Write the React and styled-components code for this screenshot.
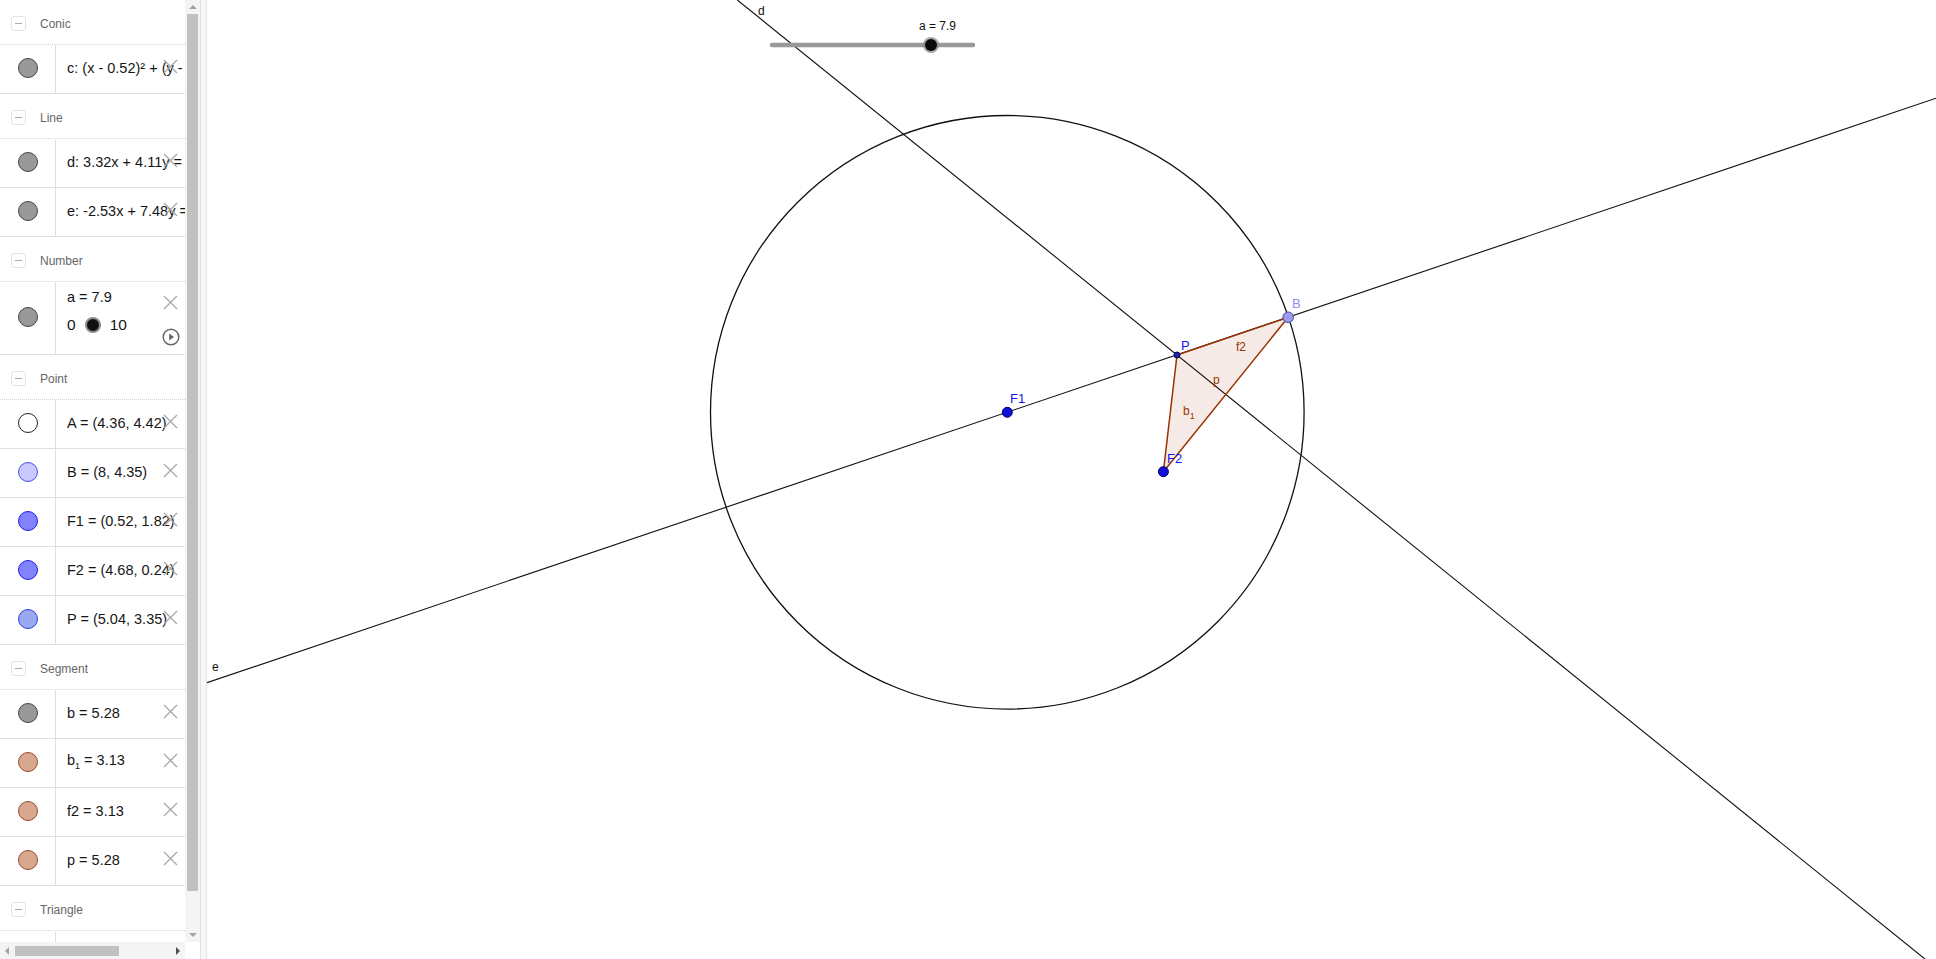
import React from 'react';
import styled, { createGlobalStyle } from 'styled-components';

const Global = createGlobalStyle`
  html, body { margin: 0; padding: 0; background: #fff; overflow: hidden; }
  body { font-family: "Liberation Sans", Arial, sans-serif; }
  #root { width: 1936px; height: 959px; }
`;

const Page = styled.div`
  display: flex;
  width: 1936px;
  height: 959px;
  overflow: hidden;
`;

const Sidebar = styled.div`
  flex: 0 0 200px;
  display: flex;
  flex-direction: column;
  height: 100%;
  background: #fff;
`;

const SideMain = styled.div`
  flex: 1;
  min-height: 0;
  display: flex;
`;

const List = styled.div`
  flex: 0 0 185px;
  display: flex;
  flex-direction: column;
  overflow: hidden;
`;

const Header = styled.div`
  flex: 0 0 45px;
  box-sizing: border-box;
  display: flex;
  align-items: center;
  gap: 14px;
  padding: 3px 0 0 11px;
  border-bottom: 1px dotted #d4d4d4;
  font-size: 12px;
  color: #666;
`;

const Toggle = styled.span`
  width: 13px;
  height: 13px;
  border: 1px solid #e4e4e4;
  border-radius: 3px;
  display: flex;
  align-items: center;
  justify-content: center;
  &::after {
    content: '';
    width: 7px;
    height: 1px;
    background: #aaa;
  }
`;

const Row = styled.div`
  position: relative;
  flex: 0 0 ${(p) => p.$h || 49}px;
  box-sizing: border-box;
  display: flex;
  border-bottom: 1px solid #dedede;
`;

const MarbleCell = styled.div`
  flex: 0 0 56px;
  border-right: 1px solid #dedede;
  display: flex;
  align-items: center;
  justify-content: center;
  padding-bottom: 3px;
  box-sizing: border-box;
`;

const Marble = styled.span`
  width: 18px;
  height: 18px;
  border-radius: 50%;
  background: ${(p) => p.$fill};
  border: 1px solid ${(p) => p.$stroke};
`;

const Content = styled.div`
  flex: 1;
  min-width: 0;
  overflow: hidden;
  white-space: nowrap;
  padding-left: 11px;
  padding-bottom: 3px;
  display: flex;
  flex-direction: column;
  justify-content: center;
  font-size: 14.5px;
  color: #161616;
`;

const NumContent = styled(Content)`
  justify-content: flex-start;
  padding-top: 7px;
  gap: 11px;
`;

const SliderLine = styled.div`
  display: flex;
  align-items: center;
  gap: 9px;
  font-size: 15.5px;
`;

const Knob = styled.span`
  width: 12px;
  height: 12px;
  border-radius: 50%;
  background: #111;
  border: 2px solid #8a8a8a;
`;

const Del = styled.svg`
  position: absolute;
  right: 7px;
  top: ${(p) => p.$top}px;
  width: 15px;
  height: 15px;
`;

const Play = styled.svg`
  position: absolute;
  right: 5px;
  top: 46px;
  width: 18px;
  height: 18px;
`;

const VScroll = styled.div`
  flex: 0 0 15px;
  display: flex;
  flex-direction: column;
  align-items: flex-end;
  background: #f4f4f4;
  padding-right: 2px;
  box-sizing: border-box;
`;

const Arrow = styled.span`
  flex: 0 0 14px;
  width: 11px;
  display: flex;
  align-items: center;
  justify-content: center;
  &::after {
    content: '';
    border-left: 4px solid transparent;
    border-right: 4px solid transparent;
    ${(p) => (p.$down ? 'border-top: 4px solid #a3a3a3;' : 'border-bottom: 4px solid #a3a3a3;')}
  }
`;

const VThumb = styled.div`
  width: 11px;
  flex: 0 0 877px;
  background: #c1c1c1;
`;

const VSpace = styled.div`
  flex: 1;
`;

const HScrollRow = styled.div`
  flex: 0 0 17px;
  display: flex;
`;

const HScroll = styled.div`
  flex: 0 0 185px;
  display: flex;
  align-items: center;
  background: #f4f4f4;
`;

const HArrow = styled.span`
  flex: 0 0 14px;
  height: 17px;
  display: flex;
  align-items: center;
  justify-content: center;
  &::after {
    content: '';
    border-top: 4px solid transparent;
    border-bottom: 4px solid transparent;
    ${(p) => (p.$right ? 'border-left: 4px solid #505050;' : 'border-right: 4px solid #a3a3a3;')}
  }
`;

const HThumb = styled.div`
  flex: 0 0 104px;
  height: 10px;
  background: #c1c1c1;
  margin-left: 1px;
`;

const Corner = styled.div`
  flex: 1;
  background: #fff;
`;

const Splitter = styled.div`
  flex: 0 0 7px;
  box-sizing: border-box;
  border-left: 1px solid #e2e2e2;
  border-right: 1px solid #e2e2e2;
  background: #f7f7f7;
`;

const Canvas = styled.div`
  flex: 1;
  position: relative;
  background: #fff;
`;

const Board = styled.svg`
  display: block;
  font-family: "Liberation Sans", Arial, sans-serif;
`;

const DelIcon = ({ top }) => (
  <Del $top={top} viewBox="0 0 15 15">
    <path d="M1 1 L14 14 M14 1 L1 14" stroke="#a9a9a9" strokeWidth="1.4" fill="none" />
  </Del>
);

const grey = { fill: '#999', stroke: '#444' };
const brown = { fill: '#d7a78f', stroke: '#9a4b27' };

const groups = [
  { title: 'Conic', items: [{ m: grey, t: 'c: (x - 0.52)² + (y - 1.82)² = 62.41' }] },
  {
    title: 'Line',
    items: [
      { m: grey, t: 'd: 3.32x + 4.11y = 30.5' },
      { m: grey, t: 'e: -2.53x + 7.48y = 12.32' },
    ],
  },
  { title: 'Number', number: true },
  {
    title: 'Point',
    items: [
      { m: { fill: '#fff', stroke: '#222' }, t: 'A = (4.36, 4.42)' },
      { m: { fill: '#c8c8ff', stroke: '#4d4df0' }, t: 'B = (8, 4.35)' },
      { m: { fill: '#8282ff', stroke: '#2020e0' }, t: 'F1 = (0.52, 1.82)' },
      { m: { fill: '#8282ff', stroke: '#2020e0' }, t: 'F2 = (4.68, 0.24)' },
      { m: { fill: '#9aa8f0', stroke: '#2b3fe0' }, t: 'P = (5.04, 3.35)' },
    ],
  },
  {
    title: 'Segment',
    items: [
      { m: grey, t: 'b = 5.28' },
      { m: brown, t: <>b<sub style={{ fontSize: '9px' }}>1</sub> = 3.13</> },
      { m: brown, t: 'f2 = 3.13' },
      { m: brown, t: 'p = 5.28' },
    ],
  },
  { title: 'Triangle', items: [{ m: brown, t: 't1 = 3.2' }] },
];

const P = { x: 1177, y: 355 };
const B = { x: 1288.2, y: 317.3 };
const F1 = { x: 1007.3, y: 412.3 };
const F2 = { x: 1163.4, y: 471.7 };

export default function App() {
  return (
    <>
      <Global />
      <Page>
        <Sidebar>
          <SideMain>
            <List>
              {groups.map((g) => (
                <React.Fragment key={g.title}>
                  <Header>
                    <Toggle />
                    {g.title}
                  </Header>
                  {g.number ? (
                    <Row $h={73}>
                      <MarbleCell>
                        <Marble $fill={grey.fill} $stroke={grey.stroke} />
                      </MarbleCell>
                      <NumContent>
                        <span>a = 7.9</span>
                        <SliderLine>
                          <span>0</span>
                          <Knob />
                          <span>10</span>
                        </SliderLine>
                      </NumContent>
                      <DelIcon top={13} />
                      <Play viewBox="0 0 18 18">
                        <circle cx="9" cy="9" r="7.8" fill="none" stroke="#666" strokeWidth="1.5" />
                        <path d="M7.2 5.6 L12 9 L7.2 12.4 Z" fill="#666" />
                      </Play>
                    </Row>
                  ) : (
                    g.items.map((it, i) => (
                      <Row key={i}>
                        <MarbleCell>
                          <Marble $fill={it.m.fill} $stroke={it.m.stroke} />
                        </MarbleCell>
                        <Content>
                          <span>{it.t}</span>
                        </Content>
                        <DelIcon top={14} />
                      </Row>
                    ))
                  )}
                </React.Fragment>
              ))}
            </List>
            <VScroll>
              <Arrow />
              <VThumb />
              <VSpace />
              <Arrow $down />
            </VScroll>
          </SideMain>
          <HScrollRow>
            <HScroll>
              <HArrow />
              <HThumb />
              <VSpace />
              <HArrow $right />
            </HScroll>
            <Corner />
          </HScrollRow>
        </Sidebar>
        <Splitter />
        <Canvas>
          <Board width="1729" height="959" viewBox="207 0 1729 959">
            <line x1="207" y1="682.7" x2="1936" y2="98.2" stroke="#111" strokeWidth="1.1" />
            <line x1="737.3" y1="0" x2="1924.9" y2="959" stroke="#111" strokeWidth="1.1" />
            <circle cx={F1.x} cy={F1.y} r="296.8" fill="none" stroke="#111" strokeWidth="1.3" />
            <polygon
              points={`${P.x},${P.y} ${B.x},${B.y} ${F2.x},${F2.y}`}
              fill="rgba(153,51,0,0.1)"
              stroke="#993300"
              strokeWidth="1.5"
              strokeLinejoin="round"
            />
            <circle cx={F1.x} cy={F1.y} r="5" fill="#1010d8" stroke="#00006e" strokeWidth="1" />
            <circle cx={F2.x} cy={F2.y} r="5" fill="#1010d8" stroke="#00006e" strokeWidth="1" />
            <circle cx={B.x} cy={B.y} r="5.3" fill="#9b9bec" stroke="#4a4a9c" strokeWidth="1" />
            <circle cx={P.x} cy={P.y} r="3" fill="#2020b8" stroke="#00004a" strokeWidth="1" />

            <text x="758" y="15" fontSize="12" fill="#111">d</text>
            <text x="212" y="671" fontSize="12" fill="#111">e</text>
            <text x="1010" y="403" fontSize="13" fill="#1515ee">F1</text>
            <text x="1181" y="350" fontSize="13" fill="#1515ee">P</text>
            <text x="1292" y="308" fontSize="13" fill="#8c8cf4">B</text>
            <text x="1167" y="463" fontSize="13" fill="#1515ee">F2</text>
            <text x="1236" y="351" fontSize="12" fill="#993300">f2</text>
            <text x="1213" y="384" fontSize="12" fill="#993300">p</text>
            <text x="1183" y="415" fontSize="12" fill="#993300">
              b<tspan fontSize="9" dy="4">1</tspan>
            </text>

            <text x="919" y="30" fontSize="12" fill="#111">a = 7.9</text>
            <line x1="772" y1="45" x2="973" y2="45" stroke="#999" strokeWidth="4.5" strokeLinecap="round" />
            <circle cx="931" cy="45" r="8" fill="#888" fillOpacity="0.75" />
            <circle cx="931" cy="45" r="6" fill="#0a0a0a" />
          </Board>
        </Canvas>
      </Page>
    </>
  );
}
